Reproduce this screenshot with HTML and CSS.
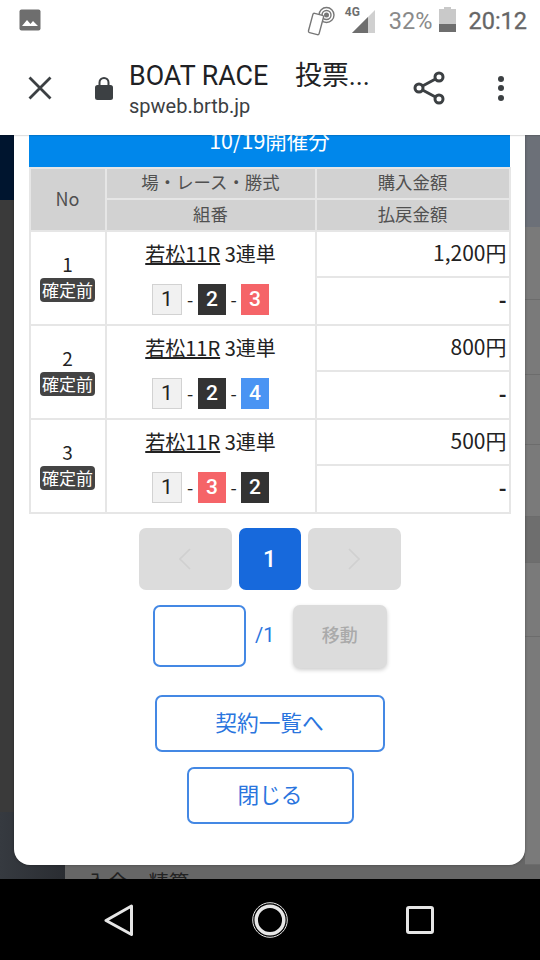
FILE: index.html
```html
<!DOCTYPE html>
<html lang="ja">
<head>
<meta charset="utf-8">
<title>BOAT RACE 投票</title>
<link rel="stylesheet" href="styles.css">
</head>
<body>
<div class="screen">
  <header class="status">
    <svg class="st-gallery" viewBox="0 0 22 22"><rect width="21" height="21" x="0.5" y="0.5" rx="2" fill="#6e6e6e"/><path d="M3 17l5-6 3.5 4 2.5-3 5 5z" fill="#fff"/></svg>
    <div class="status-right">
      <svg class="st-nfc" viewBox="0 0 28 30" fill="none" stroke="#777" stroke-width="1.4"><circle cx="20" cy="9" r="7.500"/><circle cx="20" cy="9" r="4.500"/><circle cx="20" cy="9" r="1.800" fill="#777"/><rect x="4" y="8" width="11" height="20" rx="1.500" fill="#fff" transform="rotate(15 9.500 18)"/></svg>
      <div class="st-signal">
        <span class="st-4g">4G</span>
        <svg viewBox="0 0 23 23"><path d="M0 23L23 0v23z" fill="#d0d0d0"/><path d="M0 23L16 7v16z" fill="#6e6e6e"/></svg>
      </div>
      <span class="st-pct">32%</span>
      <svg class="st-batt" viewBox="0 0 17 25"><path d="M5 0h7v2h5v23H0V2h5z" fill="#c9c9c9"/><rect y="17" width="17" height="8" fill="#6e6e6e"/></svg>
      <span class="st-time">20:12</span>
    </div>
  </header>
  <nav class="toolbar">
    <svg class="tb-close" viewBox="0 0 24 24" fill="none" stroke="#3c4043" stroke-width="2.8"><path d="M1.5 1.5l21 21M22.5 1.5l-21 21"/></svg>
    <svg class="tb-lock" viewBox="0 0 18 24"><path d="M4.5 10V6.500a4.500 4.500 0 0 1 9 0V10" fill="none" stroke="#3c4043" stroke-width="2"/><rect y="9" width="18" height="15" rx="2.500" fill="#3c4043"/></svg>
    <div class="tb-text">
      <div class="tb-title">BOAT RACE　投票...</div>
      <div class="tb-url">spweb.brtb.jp</div>
    </div>
    <svg class="tb-share" viewBox="0 0 32 34" fill="none" stroke="#3c4043" stroke-width="3"><circle cx="26" cy="6" r="4"/><circle cx="6" cy="17" r="4"/><circle cx="26" cy="28" r="4"/><path d="M9.500 15l13-7M9.500 19l13 7"/></svg>
    <svg class="tb-more" viewBox="0 0 8 26" fill="#3c4043"><circle cx="4" cy="4" r="3"/><circle cx="4" cy="13" r="3"/><circle cx="4" cy="23" r="3"/></svg>
  </nav>
  <main class="page">
    <div class="bd-left">
      <div class="bd-navy"></div>
      <div class="bd-dark"></div>
      <div class="bd-slate"></div>
    </div>
    <div class="bd-right">
      <div class="bd-r0"></div>
      <div class="bd-r1"></div>
      <div class="bd-r2"></div>
      <div class="bd-r3"></div>
      <div class="bd-r4"></div>
      <div class="bd-r5"></div>
      <div class="bd-r6"></div>
      <div class="bd-r7"></div>
    </div>
    <div class="bd-bottom"><span>入金・精算</span></div>
    <section class="modal">
      <h2 class="band">10/19開催分</h2>
      <table class="bets">
        <thead>
          <tr><th rowspan="2" class="c-no">No</th><th class="c-race">場・レース・勝式</th><th class="c-amt">購入金額</th></tr>
          <tr><th>組番</th><th>払戻金額</th></tr>
        </thead>
        <tbody>
          <tr>
            <td rowspan="2" class="no"><div>1</div><span class="tag">確定前</span></td>
            <td rowspan="2" class="race">
              <div class="race-name"><u>若松11R</u> 3連単</div>
              <div class="combo"><b class="b1">1</b><i class="gap1">-</i><b class="b2">2</b><i>-</i><b class="b3">3</b></div>
            </td>
            <td class="amt">1,200円</td>
          </tr>
          <tr><td class="amt pay">-</td></tr>
          <tr>
            <td rowspan="2" class="no"><div>2</div><span class="tag">確定前</span></td>
            <td rowspan="2" class="race">
              <div class="race-name"><u>若松11R</u> 3連単</div>
              <div class="combo"><b class="b1">1</b><i class="gap1">-</i><b class="b2">2</b><i>-</i><b class="b4">4</b></div>
            </td>
            <td class="amt">800円</td>
          </tr>
          <tr><td class="amt pay">-</td></tr>
          <tr>
            <td rowspan="2" class="no"><div>3</div><span class="tag">確定前</span></td>
            <td rowspan="2" class="race">
              <div class="race-name"><u>若松11R</u> 3連単</div>
              <div class="combo"><b class="b1">1</b><i class="gap1">-</i><b class="b3">3</b><i>-</i><b class="b2">2</b></div>
            </td>
            <td class="amt">500円</td>
          </tr>
          <tr><td class="amt pay">-</td></tr>
        </tbody>
      </table>
      <div class="pager">
        <button class="pg pg-arrow"><svg viewBox="0 0 12 22" fill="none" stroke="#d0d0d0" stroke-width="1.600"><path d="M11 1L1 11l10 10"/></svg></button>
        <button class="pg pg-on">1</button>
        <button class="pg pg-arrow"><svg viewBox="0 0 12 22" fill="none" stroke="#d0d0d0" stroke-width="1.600"><path d="M1 1l10 10L1 21"/></svg></button>
      </div>
      <div class="jump">
        <div class="jump-input"></div>
        <span class="jump-total">/1</span>
        <button class="jump-go">移動</button>
      </div>
      <button class="outline wide">契約一覧へ</button>
      <button class="outline narrow">閉じる</button>
    </section>
  </main>
  <footer class="navbar">
    <svg class="nav-back" viewBox="0 0 30 32" fill="none" stroke="#e6e6e6" stroke-width="3" stroke-linejoin="round"><path d="M27.500 2L2 16.500 27.500 30.500z"/></svg>
    <svg class="nav-home" viewBox="0 0 36 36" fill="none"><circle cx="18" cy="18" r="17.300" stroke="#e6e6e6" stroke-width="1"/><circle cx="18" cy="18" r="13.800" stroke="#e6e6e6" stroke-width="3.500"/></svg>
    <svg class="nav-recent" viewBox="0 0 28 28" fill="none" stroke="#e6e6e6" stroke-width="3"><rect x="1.500" y="1.500" width="25" height="25" rx="1.500"/></svg>
  </footer>
</div>
</body>
</html>
```
FILE: styles.css
```css
* { box-sizing: border-box; }
html, body { margin: 0; padding: 0; background: #000; }
body { font-family: "Noto Sans CJK JP", "Noto Sans", sans-serif; }
.screen { width: 540px; height: 960px; display: flex; flex-direction: column; overflow: hidden; }

/* status bar */
.status { height: 41px; background: #fff; display: flex; align-items: center; justify-content: space-between; padding: 0 13px 0 19px; position: relative; z-index: 3; }
.st-gallery { width: 22px; height: 22px; margin-top: -1px; }
.status-right { display: flex; align-items: center; }
.st-nfc { width: 29px; height: 30px; margin-right: 10px; margin-top: 1px; }
.st-signal { position: relative; width: 30px; height: 26px; margin-right: 14px; }
.st-signal svg { position: absolute; right: 0; bottom: 0; width: 23px; height: 23px; margin-bottom: 1px; }
.st-4g { position: absolute; left: 0; top: -3px; font: 700 12px/14px Roboto, sans-serif; color: #6e6e6e; }
.st-pct { font: 400 23.500px/28px Roboto, sans-serif; color: #8a8a8a; margin-right: 7px; }
.st-batt { width: 17px; height: 25px; margin-right: 12px; margin-top: -2px; }
.st-time { font: 400 23.500px/28px Roboto, sans-serif; color: #666; -webkit-text-stroke: 0.3px #666; }

/* browser toolbar */
.toolbar { height: 94px; background: #fff; display: flex; align-items: center; position: relative; z-index: 3; box-shadow: 0 1px 1px rgba(0,0,0,.12); }
.tb-close { width: 24px; height: 24px; margin-left: 28px; flex: none; }
.tb-lock { width: 18px; height: 24px; margin-left: 43px; flex: none; }
.tb-text { width: 284px; margin-left: 16px; flex: none; }
.tb-title { font: 400 26.800px/34px Roboto, "Noto Sans CJK JP", sans-serif; color: #202124; white-space: nowrap; margin-top: 1px; }
.tb-url { font: 400 20px/26px Roboto, sans-serif; color: #3c4043; }
.tb-share { width: 32px; height: 34px; flex: none; }
.tb-more { width: 8px; height: 26px; margin-left: 52px; flex: none; }

/* blurred page behind the dialog */
.page { flex: 1; position: relative; background: #666; min-height: 0; }
.bd-left { position: absolute; left: 0; top: 0; bottom: 0; width: 65px; display: flex; flex-direction: column; }
.bd-navy { height: 65px; background: #00152f; }
.bd-dark { height: 612px; background: #3a3a3a; }
.bd-slate { flex: 1; background: linear-gradient(90deg, #363a40, #2a2d32); }
.bd-right { position: absolute; right: 0; top: 0; width: 15px; height: 730px; display: flex; flex-direction: column; }
.bd-right div { border-bottom: 1px solid #6c6c6c; background: #7a7a7a; }
.bd-r0 { height: 92px; background: #6c7078 !important; border: 0 !important; }
.bd-r1 { height: 73px; }
.bd-r2 { height: 75px; }
.bd-r3 { height: 70px; }
.bd-r4 { height: 72px; }
.bd-r5 { height: 46px; background: #6e6e6e !important; }
.bd-r6 { height: 74px; }
.bd-r7 { height: 228px; }
.bd-bottom { position: absolute; left: 65px; right: 0; top: 730px; bottom: 0; background: #666; overflow: hidden; }
.bd-bottom span { position: absolute; left: 22px; top: 2px; font-size: 20.500px; line-height: 28px; color: #222; }

/* dialog */
.modal { position: relative; z-index: 1; width: 511px; height: 730px; margin-left: 14px; padding: 0 15px; background: #fff; border-radius: 0 0 16px 16px; display: flex; flex-direction: column; align-items: center; box-shadow: 0 0 3px rgba(0,0,0,.35); }
.band { width: 100%; height: 32px; flex: none; margin: 0; background: #0087eb; color: #fff; text-align: center; font-size: 21.500px; font-weight: 400; line-height: 10px; }

.bets { width: 482px; table-layout: fixed; border-collapse: collapse; flex: none; color: #222; }
.bets th, .bets td { border: 2px solid #e6e6e6; padding: 0; }
.bets th { height: 31px; padding-bottom: 3px; background: #d2d2d2; font-size: 17.400px; font-weight: 400; color: #505050; line-height: 20px; }
.bets thead tr + tr th { height: 32px; }
.bets .c-no { width: 76px; font-size: 18px; }
.c-race { width: 210px; }
.no { text-align: center; font-size: 19px; line-height: 24px; vertical-align: top; padding-top: 20px !important; }
.tag { display: inline-block; width: 55px; height: 24px; margin-top: 2px; vertical-align: top; border-radius: 4px; background: #444; color: #fff; font-size: 17px; line-height: 23px; white-space: nowrap; }
.race { text-align: center; vertical-align: top; }
.race-name { margin-top: 7px; font-size: 20px; line-height: 29px; white-space: nowrap; }
.combo { margin-top: 16px; display: flex; justify-content: center; align-items: center; height: 31px; }
.combo b { width: 28px; height: 31px; font-family: Roboto, sans-serif; font-size: 21px; font-weight: 500; line-height: 31px; text-align: center; }
.combo i { width: 15px; font-style: normal; font-size: 18px; line-height: 31px; text-align: center; }
.combo .gap1 { width: 16px; }
.combo .b1 { width: 30px; font-weight: 400; background: #f1f1f1; border: 1px solid #d2d2d2; color: #222; line-height: 29px; }
.b2 { background: #333; color: #fff; }
.b3 { background: #f56468; color: #fff; }
.b4 { background: #4a94f3; color: #fff; }
.amt { height: 46px; text-align: right; vertical-align: top; padding: 5px 2px 0 0 !important; font-size: 21px; line-height: 30px; white-space: nowrap; }
.pay { height: 48px; padding-top: 6px !important; font-weight: 700; }

.pager { display: flex; gap: 7px; margin-top: 14px; flex: none; }
.pg { height: 62px; border: 0; border-radius: 7px; padding: 0; display: flex; align-items: center; justify-content: center; }
.pg-arrow { width: 93px; background: #dcdcdc; }
.pg-arrow svg { width: 12px; height: 22px; }
.pg-on { width: 62px; background: #1769dc; color: #fff; font: 500 23px/1 Roboto, sans-serif; }

.jump { width: 234px; height: 62px; margin-top: 15px; flex: none; display: flex; align-items: center; }
.jump-input { width: 94px; height: 62px; border: 2px solid #4488e4; border-radius: 7px; background: #fff; }
.jump-total { width: 47px; padding-left: 9px; margin-top: -3px; font: 400 20px/24px Roboto, sans-serif; color: #2a75de; }
.jump-go { width: 94px; height: 63px; border: 0; border-radius: 7px; background: #dcdcdc; color: #aaa; font-family: inherit; font-size: 18px; font-weight: 500; box-shadow: 0 2px 4px rgba(0,0,0,.2); padding: 0 0 4px; }

.outline { flex: none; display: block; border: 2px solid #4488e4; border-radius: 7px; background: #fff; color: #2a75de; font-family: inherit; font-size: 21.700px; padding: 0 0 4px; }
.wide { width: 230px; height: 57px; margin-top: 28px; }
.narrow { width: 167px; height: 57px; margin-top: 15px; margin-left: 1px; }

/* system navigation */
.navbar { height: 81px; flex: none; background: #000; position: relative; z-index: 3; display: flex; align-items: center; padding: 0 106px 0 104px; justify-content: space-between; }
.nav-back { width: 30px; height: 32px; }
.nav-home { width: 36px; height: 36px; }
.nav-recent { width: 28px; height: 28px; }
```
